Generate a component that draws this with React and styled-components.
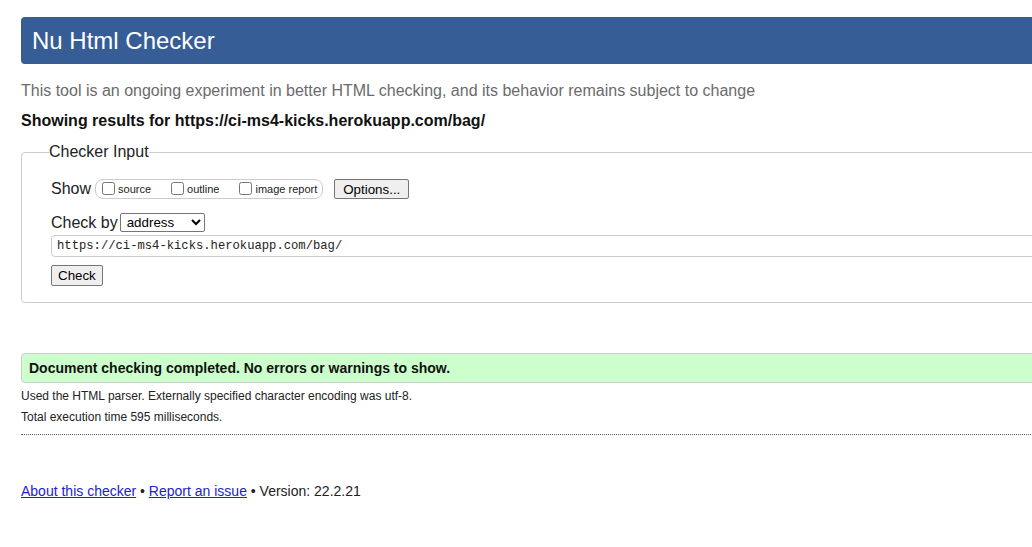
import React from 'react';
import styled, { createGlobalStyle } from 'styled-components';

const GlobalStyle = createGlobalStyle`
  html, body {
    margin: 0;
    padding: 0;
    overflow: hidden;
    background: #fff;
  }
  body {
    font-family: "Liberation Sans", Arial, sans-serif;
    color: #222;
  }
`;

const Page = styled.div`
  width: 1200px;
  padding: 17px 0 40px 21px;
`;

const Header = styled.h1`
  margin: 0;
  height: 47px;
  display: flex;
  align-items: center;
  padding-left: 11px;
  background: #365d95;
  color: #fff;
  border-radius: 4px 0 0 4px;
  font-size: 24px;
  font-weight: normal;
`;

const Intro = styled.p`
  margin: 18px 0 0;
  font-size: 16px;
  line-height: 18px;
  color: #6b6b6b;
`;

const Results = styled.p`
  margin: 12px 0 0;
  font-size: 16px;
  line-height: 18px;
  font-weight: bold;
  color: #111;
`;

const Fieldset = styled.fieldset`
  margin: 13px 0 0;
  padding: 0 0 16px 29px;
  border: 1px solid #ccc;
  border-radius: 4px 0 0 4px;
`;

const Legend = styled.legend`
  margin-left: -2px;
  padding: 0;
  font-size: 16px;
  line-height: 18px;
  color: #222;
`;

const Row = styled.div`
  display: flex;
  align-items: center;
  margin-top: ${(p) => p.$top}px;
  height: ${(p) => p.$height}px;
`;

const Label = styled.span`
  font-size: 16px;
  color: #222;
  margin-right: ${(p) => p.$gap ?? 4}px;
`;

const CheckGroup = styled.div`
  display: flex;
  align-items: center;
  height: 18px;
  padding: 0 5px 0 2px;
  border: 1px solid #ccc;
  border-radius: 8px;
  gap: 16px;
`;

const CheckItem = styled.label`
  display: flex;
  align-items: center;
  font-size: 11px;
  color: #222;

  input {
    margin: 0 3px 1px 4px;
    width: 13px;
    height: 13px;
  }
`;

const Button = styled.button`
  font-family: "Liberation Sans", Arial, sans-serif;
  font-size: 13.33px;
  height: ${(p) => p.$height || 21}px;
  padding: 0 ${(p) => p.$pad || 8}px;
  margin-left: ${(p) => p.$left || 0}px;
  background: #efefef;
  border: 1px solid #767676;
  border-radius: 2px;
  color: #000;
`;

const Select = styled.select`
  font-family: "Liberation Sans", Arial, sans-serif;
  font-size: 13.33px;
  width: 85px;
  height: 19px;
  padding: 0 2px;
  border: 1px solid #767676;
  border-radius: 2px;
  background: #fff;
  color: #000;
`;

const UrlInput = styled.input`
  display: block;
  box-sizing: border-box;
  margin-top: 3px;
  width: 1120px;
  height: 22px;
  padding: 0 5px;
  border: 1px solid #ccc;
  border-radius: 4px;
  font-family: "Liberation Mono", "DejaVu Sans Mono", monospace;
  font-size: 12.2px;
  color: #222;
`;

const CheckRow = styled.div`
  margin-top: 8px;
`;

const Success = styled.div`
  margin-top: 50px;
  height: 28px;
  display: flex;
  align-items: center;
  padding-left: 7px;
  background: #ccffcc;
  border: 1px solid #ccc;
  border-radius: 4px 0 0 4px;
  font-size: 14px;
  font-weight: bold;
  color: #111;
`;

const Note = styled.p`
  margin: ${(p) => p.$top}px 0 0;
  font-size: 12px;
  line-height: 14px;
  color: #222;
`;

const Divider = styled.hr`
  margin: 10px 0 0;
  border: none;
  border-top: 1px dotted #666;
  height: 0;
`;

const Footer = styled.p`
  margin: 48px 0 0;
  font-size: 14px;
  line-height: 16px;
  color: #222;

  a {
    color: #2222cc;
  }
`;

export default function App() {
  return (
    <>
      <GlobalStyle />
      <Page>
        <Header>Nu Html Checker</Header>
        <Intro>This tool is an ongoing experiment in better HTML checking, and its behavior remains subject to change</Intro>
        <Results>Showing results for https://ci-ms4-kicks.herokuapp.com/bag/</Results>

        <Fieldset>
          <Legend>Checker Input</Legend>
          <Row $top={18} $height={20}>
            <Label>Show</Label>
            <CheckGroup>
              <CheckItem><input type="checkbox" />source</CheckItem>
              <CheckItem><input type="checkbox" />outline</CheckItem>
              <CheckItem><input type="checkbox" />image report</CheckItem>
            </CheckGroup>
            <Button $left={11} $height={20}>Options...</Button>
          </Row>
          <Row $top={14} $height={19}>
            <Label $gap={2}>Check by</Label>
            <Select defaultValue="address">
              <option value="address">address</option>
              <option value="file">file upload</option>
              <option value="text">text input</option>
            </Select>
          </Row>
          <UrlInput defaultValue="https://ci-ms4-kicks.herokuapp.com/bag/" />
          <CheckRow>
            <Button $pad={6}>Check</Button>
          </CheckRow>
        </Fieldset>

        <Success>Document checking completed. No errors or warnings to show.</Success>
        <Note $top={6}>Used the HTML parser. Externally specified character encoding was utf-8.</Note>
        <Note $top={7}>Total execution time 595 milliseconds.</Note>
        <Divider />

        <Footer>
          <a href="#about">About this checker</a> • <a href="#issue">Report an issue</a> • Version: 22.2.21
        </Footer>
      </Page>
    </>
  );
}
